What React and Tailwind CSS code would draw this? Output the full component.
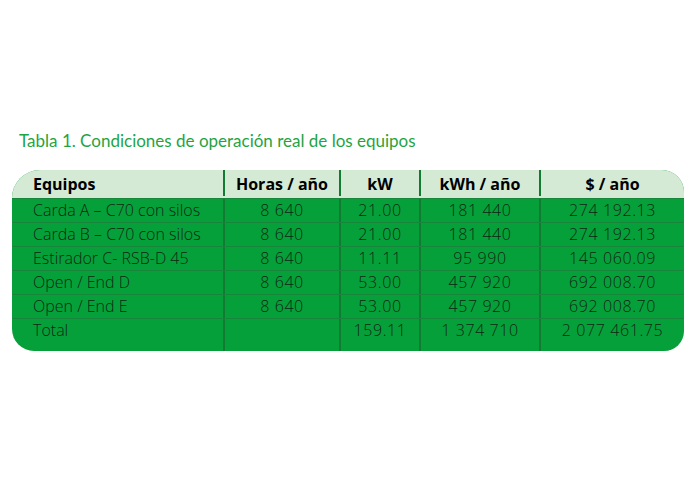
import React from "react";

const ROWS = [
  ["Carda A – C70 con silos", "8 640", "21.00", "181 440", "274 192.13"],
  ["Carda B – C70 con silos", "8 640", "21.00", "181 440", "274 192.13"],
  ["Estirador C- RSB-D 45", "8 640", "11.11", "95 990", "145 060.09"],
  ["Open / End D", "8 640", "53.00", "457 920", "692 008.70"],
  ["Open / End E", "8 640", "53.00", "457 920", "692 008.70"],
];

const COLS = "grid grid-cols-[211px_116px_80px_120px_145px]";
const NUM = "border-l-2 border-[#137a34] text-center tracking-[0.6px]";

export default function App() {
  return (
    <div className="w-[700px] h-[480px] bg-white pt-[130px] px-3" style={{ fontFamily: '"Open Sans", sans-serif' }}>
      {/* Title */}
      <p className="ml-[7px] text-[17px] leading-[22px] text-[#1fa443]" style={{ fontFamily: 'Lato, sans-serif' }}>
        Tabla 1. Condiciones de operación real de los equipos
      </p>

      {/* Table */}
      <div className="mt-[18px] w-[672px] rounded-tl-[28px] rounded-tr-[22px] rounded-bl-[22px] rounded-br-[20px] overflow-hidden bg-[#05a03a] text-[16px] font-light text-[#0e2812]">
        <div className={`${COLS} h-[28px] bg-[#d4ead4] font-bold text-black items-end pb-[2px]`}>
          <div className="pl-[21px]">Equipos</div>
          <div className="border-l-2 border-[#137a34] h-full flex items-end justify-center">Horas / año</div>
          <div className="border-l-2 border-[#137a34] h-full flex items-end justify-center">kW</div>
          <div className="border-l-2 border-[#137a34] h-full flex items-end justify-center">kWh / año</div>
          <div className="border-l-2 border-[#137a34] h-full flex items-end justify-center">$ / año</div>
        </div>

        {ROWS.map((r, i) => (
          <div key={i} className={`${COLS} h-[24px] border-t border-[#17853a] leading-[23px]`}>
            <div className="pl-[21px] whitespace-nowrap">{r[0]}</div>
            <div className={NUM}>{r[1]}</div>
            <div className={NUM}>{r[2]}</div>
            <div className={NUM}>{r[3]}</div>
            <div className={NUM}>{r[4]}</div>
          </div>
        ))}

        <div className={`${COLS} h-[33px] border-t border-[#17853a] leading-[22px]`}>
          <div className="pl-[21px]">Total</div>
          <div className="border-l-2 border-[#137a34]"></div>
          <div className={NUM}>159.11</div>
          <div className={NUM}>1 374 710</div>
          <div className={NUM}>2 077 461.75</div>
        </div>
      </div>
    </div>
  );
}
